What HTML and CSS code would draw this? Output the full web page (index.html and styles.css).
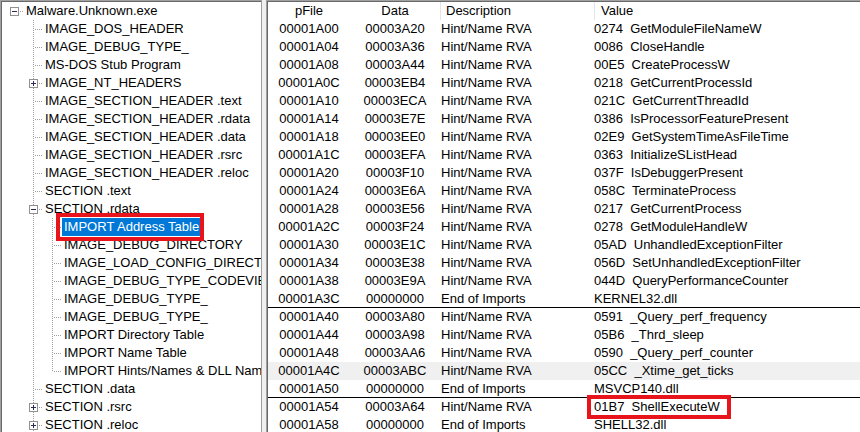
FILE: index.html
```html
<!DOCTYPE html>
<html>
<head>
<meta charset="utf-8">
<link rel="stylesheet" href="styles.css">
</head>
<body>
<div class="app">
  <div class="pane tree-pane"><div class="inner tree">
    <div class="tr"><i class="n root"><b class="bx minus"></b></i><span class="lb">Malware.Unknown.exe</span></div>
    <div class="tr"><i class="g"></i><i class="n tee"></i><span class="lb">IMAGE_DOS_HEADER</span></div>
    <div class="tr"><i class="g"></i><i class="n tee"></i><span class="lb">IMAGE_DEBUG_TYPE_</span></div>
    <div class="tr"><i class="g"></i><i class="n tee"></i><span class="lb">MS-DOS Stub Program</span></div>
    <div class="tr"><i class="g"></i><i class="n tee"><b class="bx plus"></b></i><span class="lb">IMAGE_NT_HEADERS</span></div>
    <div class="tr"><i class="g"></i><i class="n tee"></i><span class="lb">IMAGE_SECTION_HEADER .text</span></div>
    <div class="tr"><i class="g"></i><i class="n tee"></i><span class="lb">IMAGE_SECTION_HEADER .rdata</span></div>
    <div class="tr"><i class="g"></i><i class="n tee"></i><span class="lb">IMAGE_SECTION_HEADER .data</span></div>
    <div class="tr"><i class="g"></i><i class="n tee"></i><span class="lb">IMAGE_SECTION_HEADER .rsrc</span></div>
    <div class="tr"><i class="g"></i><i class="n tee"></i><span class="lb">IMAGE_SECTION_HEADER .reloc</span></div>
    <div class="tr"><i class="g"></i><i class="n tee"></i><span class="lb">SECTION .text</span></div>
    <div class="tr"><i class="g"></i><i class="n tee"><b class="bx minus"></b></i><span class="lb">SECTION .rdata</span></div>
    <div class="tr"><i class="g"></i><i class="g pipe"></i><i class="n tee"></i><span class="lb sel">IMPORT Address Table</span></div>
    <div class="tr"><i class="g"></i><i class="g pipe"></i><i class="n tee"></i><span class="lb">IMAGE_DEBUG_DIRECTORY</span></div>
    <div class="tr"><i class="g"></i><i class="g pipe"></i><i class="n tee"></i><span class="lb">IMAGE_LOAD_CONFIG_DIRECTORY</span></div>
    <div class="tr"><i class="g"></i><i class="g pipe"></i><i class="n tee"></i><span class="lb">IMAGE_DEBUG_TYPE_CODEVIEW</span></div>
    <div class="tr"><i class="g"></i><i class="g pipe"></i><i class="n tee"></i><span class="lb">IMAGE_DEBUG_TYPE_</span></div>
    <div class="tr"><i class="g"></i><i class="g pipe"></i><i class="n tee"></i><span class="lb">IMAGE_DEBUG_TYPE_</span></div>
    <div class="tr"><i class="g"></i><i class="g pipe"></i><i class="n tee"></i><span class="lb">IMPORT Directory Table</span></div>
    <div class="tr"><i class="g"></i><i class="g pipe"></i><i class="n tee"></i><span class="lb">IMPORT Name Table</span></div>
    <div class="tr"><i class="g"></i><i class="g pipe"></i><i class="n ell"></i><span class="lb">IMPORT Hints/Names &amp; DLL Names</span></div>
    <div class="tr"><i class="g"></i><i class="n tee"></i><span class="lb">SECTION .data</span></div>
    <div class="tr"><i class="g"></i><i class="n tee"><b class="bx plus"></b></i><span class="lb">SECTION .rsrc</span></div>
    <div class="tr"><i class="g"></i><i class="n tee"><b class="bx plus"></b></i><span class="lb">SECTION .reloc</span></div>
  </div></div>
  <div class="split"></div>
  <div class="pane list-pane"><div class="inner list">
    <div class="lh"><span class="c1">pFile</span><span class="c2">Data</span><span class="c3">Description</span><span class="c4">Value</span></div>
    <div class="lr"><span class="c1">00001A00</span><span class="c2">00003A20</span><span class="c3">Hint/Name RVA</span><span class="c4">0274  GetModuleFileNameW</span></div>
    <div class="lr"><span class="c1">00001A04</span><span class="c2">00003A36</span><span class="c3">Hint/Name RVA</span><span class="c4">0086  CloseHandle</span></div>
    <div class="lr"><span class="c1">00001A08</span><span class="c2">00003A44</span><span class="c3">Hint/Name RVA</span><span class="c4">00E5  CreateProcessW</span></div>
    <div class="lr"><span class="c1">00001A0C</span><span class="c2">00003EB4</span><span class="c3">Hint/Name RVA</span><span class="c4">0218  GetCurrentProcessId</span></div>
    <div class="lr"><span class="c1">00001A10</span><span class="c2">00003ECA</span><span class="c3">Hint/Name RVA</span><span class="c4">021C  GetCurrentThreadId</span></div>
    <div class="lr"><span class="c1">00001A14</span><span class="c2">00003E7E</span><span class="c3">Hint/Name RVA</span><span class="c4">0386  IsProcessorFeaturePresent</span></div>
    <div class="lr"><span class="c1">00001A18</span><span class="c2">00003EE0</span><span class="c3">Hint/Name RVA</span><span class="c4">02E9  GetSystemTimeAsFileTime</span></div>
    <div class="lr"><span class="c1">00001A1C</span><span class="c2">00003EFA</span><span class="c3">Hint/Name RVA</span><span class="c4">0363  InitializeSListHead</span></div>
    <div class="lr"><span class="c1">00001A20</span><span class="c2">00003F10</span><span class="c3">Hint/Name RVA</span><span class="c4">037F  IsDebuggerPresent</span></div>
    <div class="lr"><span class="c1">00001A24</span><span class="c2">00003E6A</span><span class="c3">Hint/Name RVA</span><span class="c4">058C  TerminateProcess</span></div>
    <div class="lr"><span class="c1">00001A28</span><span class="c2">00003E56</span><span class="c3">Hint/Name RVA</span><span class="c4">0217  GetCurrentProcess</span></div>
    <div class="lr"><span class="c1">00001A2C</span><span class="c2">00003F24</span><span class="c3">Hint/Name RVA</span><span class="c4">0278  GetModuleHandleW</span></div>
    <div class="lr"><span class="c1">00001A30</span><span class="c2">00003E1C</span><span class="c3">Hint/Name RVA</span><span class="c4">05AD  UnhandledExceptionFilter</span></div>
    <div class="lr"><span class="c1">00001A34</span><span class="c2">00003E38</span><span class="c3">Hint/Name RVA</span><span class="c4">056D  SetUnhandledExceptionFilter</span></div>
    <div class="lr"><span class="c1">00001A38</span><span class="c2">00003E9A</span><span class="c3">Hint/Name RVA</span><span class="c4">044D  QueryPerformanceCounter</span></div>
    <div class="lr sep"><span class="c1">00001A3C</span><span class="c2">00000000</span><span class="c3">End of Imports</span><span class="c4">KERNEL32.dll</span></div>
    <div class="lr"><span class="c1">00001A40</span><span class="c2">00003A80</span><span class="c3">Hint/Name RVA</span><span class="c4">0591  _Query_perf_frequency</span></div>
    <div class="lr"><span class="c1">00001A44</span><span class="c2">00003A98</span><span class="c3">Hint/Name RVA</span><span class="c4">05B6  _Thrd_sleep</span></div>
    <div class="lr"><span class="c1">00001A48</span><span class="c2">00003AA6</span><span class="c3">Hint/Name RVA</span><span class="c4">0590  _Query_perf_counter</span></div>
    <div class="lr hot"><span class="c1">00001A4C</span><span class="c2">00003ABC</span><span class="c3">Hint/Name RVA</span><span class="c4">05CC  _Xtime_get_ticks</span></div>
    <div class="lr sep"><span class="c1">00001A50</span><span class="c2">00000000</span><span class="c3">End of Imports</span><span class="c4">MSVCP140.dll</span></div>
    <div class="lr"><span class="c1">00001A54</span><span class="c2">00003A64</span><span class="c3">Hint/Name RVA</span><span class="c4 mark">01B7  ShellExecuteW</span></div>
    <div class="lr"><span class="c1">00001A58</span><span class="c2">00000000</span><span class="c3">End of Imports</span><span class="c4">SHELL32.dll</span></div>
  </div></div>
</div>
</body>
</html>
```
FILE: styles.css
```css
html, body {
  margin: 0;
  padding: 0;
}
body {
  width: 860px;
  height: 432px;
  overflow: hidden;
  background: #f0f0f0;
  font-family: "Liberation Sans", Arial, sans-serif;
  font-size: 13px;
  color: #000;
}
.app {
  display: flex;
  height: 432px;
}
.pane {
  border-top: 1px solid #a0a0a0;
  border-left: 1px solid #a0a0a0;
  background: #fff;
  overflow: hidden;
}
.inner {
  border-top: 1px solid #696969;
  border-left: 1px solid #696969;
  height: 100%;
  box-sizing: border-box;
  overflow: hidden;
}
.tree-pane {
  width: 261px;
  flex: none;
  border-right: 1px solid #a0a0a0;
  box-sizing: border-box;
  width: 262px;
}
.split {
  width: 4px;
  flex: none;
}
.list-pane {
  flex: 1;
}
.list {
  padding-left: 0;
}

/* tree */
.tr {
  display: flex;
  height: 18px;
  line-height: 18px;
  white-space: nowrap;
}
.g, .n {
  position: relative;
  flex: none;
  height: 18px;
}
.g { width: 19px; }
.n { width: 22px; }
.pipe::before, .n::before {
  content: "";
  position: absolute;
  left: 12px;
  top: 0;
  width: 1px;
  height: 18px;
  background: repeating-linear-gradient(to bottom, #a0a0a0 0 1px, transparent 1px 2px);
}
.n.ell::before { height: 10px; }
.n.root::before { display: none; }
.n::after {
  content: "";
  position: absolute;
  left: 13px;
  top: 9px;
  width: 9px;
  height: 1px;
  background: repeating-linear-gradient(to right, transparent 0 1px, #a0a0a0 1px 2px);
}
.bx {
  position: absolute;
  z-index: 1;
  left: 8px;
  top: 5px;
  width: 9px;
  height: 9px;
  box-sizing: border-box;
  border: 1px solid #919191;
  background: #fff;
}
.bx::before {
  content: "";
  position: absolute;
  left: 1px;
  top: 3px;
  width: 5px;
  height: 1px;
  background: #2b2b5a;
}
.bx.plus::after {
  content: "";
  position: absolute;
  left: 3px;
  top: 1px;
  width: 1px;
  height: 5px;
  background: #2b2b5a;
}
.lb {
  padding: 0 2px;
}
.lb.sel {
  position: relative;
  background: #0078d7;
  color: #fff;
  padding: 0 1px 0 2px;
}
.lb.sel::after {
  content: "";
  position: absolute;
  top: -5px;
  bottom: -5px;
  left: -6px;
  right: -4px;
  border: 4px solid #e8141c;
}

/* list */
.lh, .lr {
  display: grid;
  grid-template-columns: 82px 90px 154px 1fr;
  height: 18px;
  line-height: 18px;
  box-sizing: border-box;
  white-space: pre;
}
.lh .c1, .lh .c2, .lr .c1, .lr .c2 {
  text-align: center;
}
.lh .c3, .lh .c4 {
  border-left: 1px solid #e5e5e5;
  padding-left: 5px;
}
.lh .c4 { padding-left: 6px; }
.lr .c3 { padding-left: 1px; }
.lr.sep {
  border-bottom: 1px solid #000;
}
.lr.hot {
  background: #f0f0f0;
}
.mark {
  position: relative;
}
.mark::after {
  content: "";
  position: absolute;
  left: -7px;
  top: -3px;
  width: 144px;
  height: 24px;
  box-sizing: border-box;
  border: 4px solid #e8141c;
}
```
